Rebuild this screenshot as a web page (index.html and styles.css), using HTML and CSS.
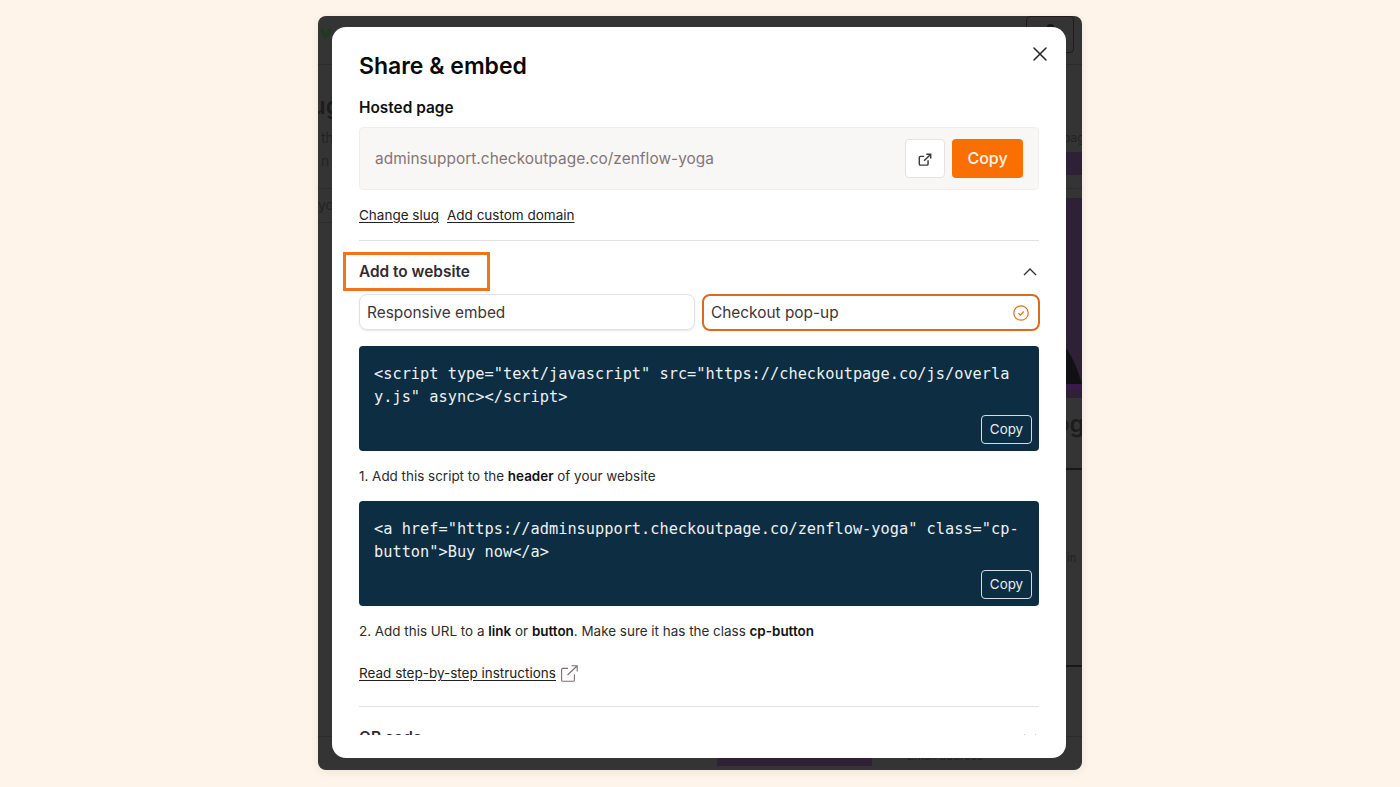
FILE: index.html
```html
<!DOCTYPE html>
<html lang="en">
<head>
<meta charset="utf-8">
<title>Share &amp; embed</title>
<link rel="stylesheet" href="styles.css">
</head>
<body>
<div class="window">
  <div class="backdrop">
    <svg class="bg-leaf" viewBox="0 0 14 14"><path d="M7 13C3 11 1 8 2 3c3 1 5 3 5 6 0-4 2-6 5-7 1 5-1 9-5 11z" fill="#1f3a22"/></svg>
    <div class="bg-btn"><span class="bg-btn-mark"></span></div>
    <div class="bg-hline bg-h1"></div>
    <div class="bg-hline bg-h2"></div>
    <div class="bg-hline bg-h3"></div>
    <div class="bg-hline bg-h4"></div>
    <div class="bg-hline bg-h5"></div>
    <div class="bg-hline bg-h6"></div>
    <div class="bg-band bg-b1"></div>
    <div class="bg-band bg-b2">
      <svg class="bg-shape" viewBox="0 0 16 50" width="16" height="50"><path d="M0 0C6 8 11 20 16 36H0z" fill="#111015"/><rect y="36" width="16" height="6" fill="#3a1a4a"/></svg>
    </div>
    <div class="bg-band bg-b3"></div>
    <span class="bg-t bg-ug">ug</span>
    <span class="bg-t bg-small bg-th">th</span>
    <span class="bg-t bg-small bg-nt">n t</span>
    <span class="bg-t bg-small bg-yo">yo</span>
    <span class="bg-t bg-small bg-pag">pag</span>
    <span class="bg-t bg-og">og</span>
    <span class="bg-t bg-small bg-in">in</span>
    <span class="bg-t bg-small bg-email">Email address</span>
  </div>
  <section class="modal">
    <button class="close" aria-label="Close">
      <svg viewBox="0 0 16 16" width="16" height="16"><path d="M2 2l12 12M14 2L2 14" fill="none" stroke="#222" stroke-width="1.5" stroke-linecap="round"/></svg>
    </button>
    <div class="scroll">
      <h1 class="title">Share &amp; embed</h1>
      <h2 class="label">Hosted page</h2>
      <div class="hosted">
        <span class="url">adminsupport.checkoutpage.co/zenflow-yoga</span>
        <button class="open-btn" aria-label="Open">
          <svg viewBox="0 0 16 16" width="14" height="14"><path d="M7 5H2.800A1.300 1.300 0 0 0 1.500 6.300v7.400a1.300 1.300 0 0 0 1.300 1.300h7.400a1.300 1.300 0 0 0 1.300-1.300V9.500M7 10l7.500-7.500M9.500 2.500h5v5" fill="none" stroke="#3f3a3c" stroke-width="1.700"/></svg>
        </button>
        <button class="copy-main">Copy</button>
      </div>
      <div class="links">
        <a class="link" href="#">Change slug</a>
        <a class="link" href="#">Add custom domain</a>
      </div>
      <hr class="rule">
      <div class="acc-head">
        <h2 class="acc-title highlighted">Add to website</h2>
        <svg class="chev" viewBox="0 0 14 8" width="14" height="8"><path d="M1 7l6-6 6 6" fill="none" stroke="#333" stroke-width="1.400"/></svg>
      </div>
      <div class="tabs">
        <div class="tab">Responsive embed</div>
        <div class="tab active">Checkout pop-up
          <svg viewBox="0 0 16 16" width="16" height="16"><circle cx="8" cy="8" r="7.200" fill="none" stroke="#e0701e" stroke-width="1.200"/><path d="M5.400 8.200l1.900 1.900 3.400-3.600" fill="none" stroke="#e0701e" stroke-width="1.200"/></svg>
        </div>
      </div>
      <div class="code">
        <code>&lt;script type="text/javascript" src="https://checkoutpage.co/js/overlay.js" async&gt;&lt;/script&gt;</code>
        <button class="copy-code">Copy</button>
      </div>
      <p class="note">1. Add this script to the <b>header</b> of your website</p>
      <div class="code">
        <code>&lt;a href="https://adminsupport.checkoutpage.co/zenflow-yoga" class="cp-button"&gt;Buy now&lt;/a&gt;</code>
        <button class="copy-code">Copy</button>
      </div>
      <p class="note">2. Add this URL to a <b>link</b> or <b>button</b>. Make sure it has the class <b>cp-button</b></p>
      <div class="steps">
        <a class="link" href="#">Read step-by-step instructions</a>
        <svg viewBox="0 0 17 17" width="17" height="17"><path d="M7 3.400H1.600a1 1 0 0 0-1 1v10.800a1 1 0 0 0 1 1h10.800a1 1 0 0 0 1-1V9.500M6.500 10 16 1M10.500.8h5.700v5.700" fill="none" stroke="#7d6c70" stroke-width="1.100"/></svg>
      </div>
      <hr class="rule rule-lower">
      <div class="acc-head">
        <h2 class="acc-title">QR code</h2>
        <svg class="chev" viewBox="0 0 14 8" width="14" height="8"><path d="M1 1l6 6 6-6" fill="none" stroke="#333" stroke-width="1.400"/></svg>
      </div>
    </div>
  </section>
</div>
</body>
</html>
```
FILE: styles.css
```css
* { box-sizing: border-box; }
html, body { margin: 0; height: 100%; }
body {
  background: #fef4ea;
  padding-top: 16px;
  font-family: Inter, "Liberation Sans", sans-serif;
  overflow: hidden;
  color: #111;
}
.window {
  position: relative;
  width: 764px;
  height: 754px;
  margin: 0 auto;
  border-radius: 8px;
  background: #343434;
  overflow: hidden;
  box-shadow: 0 2px 8px rgba(60, 40, 20, .08);
}
.backdrop { position: absolute; inset: 0; }
.bg-leaf { position: absolute; left: 1px; top: 10px; width: 14px; height: 14px; }
.bg-btn { position: absolute; left: 708px; top: 0; width: 48px; height: 37px; border: 1px solid #221a18; border-radius: 4px; }
.bg-btn-mark { position: absolute; left: 20px; top: 7px; width: 7px; height: 5px; border-radius: 3px 3px 0 0; background: #151515; }
.bg-hline { position: absolute; left: 0; right: 0; height: 1px; background: #2c2c2c; }
.bg-h1 { top: 48px; }
.bg-h2 { top: 172px; left: 0; }
.bg-h3 { top: 206px; }
.bg-h4 { top: 452px; left: 740px; height: 2px; background: #181818; }
.bg-h5 { top: 649px; left: 740px; height: 2px; background: #181818; }
.bg-h6 { top: 720px; }
.bg-band { position: absolute; background: #2e2035; }
.bg-b1 { left: 748px; width: 16px; top: 136px; height: 23px; }
.bg-b2 { left: 748px; width: 16px; top: 182px; height: 200px; }
.bg-b3 { left: 399px; width: 155px; top: 730px; height: 20px; }
.bg-shape { position: absolute; left: 0; top: 150px; }
.bg-t { position: absolute; color: #1c1c1c; font-size: 24px; font-weight: 600; line-height: 1; }
.bg-small { font-size: 14px; font-weight: 400; color: #232323; }
.bg-ug { left: -7px; top: 78px; }
.bg-th { left: 3px; top: 115px; }
.bg-nt { left: 3px; top: 138px; }
.bg-yo { left: 0; top: 182px; }
.bg-pag { left: 745px; top: 116px; font-size: 12px; }
.bg-og { left: 737px; top: 396px; }
.bg-in { left: 749px; top: 537px; font-size: 11px; }
.bg-email { left: 589px; top: 735px; font-size: 11.500px; }
.modal {
  position: absolute;
  left: 14px;
  top: 11px;
  width: 734px;
  height: 731px;
  background: #fff;
  border-radius: 14px;
}
.close {
  position: absolute;
  top: 19px;
  right: 18px;
  width: 16px;
  height: 16px;
  padding: 0;
  border: 0;
  background: none;
  display: flex;
  z-index: 1;
}
.scroll { height: 708px; overflow: hidden; padding: 25px 27px 0; }
.title { margin: 0; font-size: 23px; line-height: 29px; font-weight: 600; color: #0a0a0a; }
.label { margin: 17px 0 0; font-size: 15.400px; line-height: 20px; font-weight: 600; color: #111; }
.hosted {
  margin-top: 9px;
  height: 63px;
  display: flex;
  align-items: center;
  gap: 7px;
  padding: 0 15px;
  background: #f9f7f6;
  border: 1px solid #f1efee;
  border-radius: 4px;
}
.url { flex: 1; font-size: 15.400px; color: #85757a; letter-spacing: .05px; }
.open-btn {
  width: 40px;
  height: 39px;
  padding: 0;
  display: flex;
  align-items: center;
  justify-content: center;
  background: #fff;
  border: 1px solid #e4e2e2;
  border-radius: 4px;
}
.copy-main {
  width: 71px;
  height: 39px;
  padding: 0 0 2px;
  border: 0;
  border-radius: 4px;
  background: #f96f03;
  color: #fdf3ea;
  font: 500 16px Inter, sans-serif;
}
.links { display: flex; gap: 8px; margin-top: 16px; line-height: 18px; }
.link { color: #222; text-decoration: underline; text-underline-offset: 2px; font-size: 13.500px; font-weight: 400; }
.rule { margin: 16px 0 0; border: 0; height: 1px; background: #e3e1e3; }
.acc-head { display: flex; align-items: center; justify-content: space-between; height: 33px; margin-top: 14px; padding-right: 2px; }
.acc-title { margin: 0; font-size: 15.400px; line-height: 20px; font-weight: 600; color: #332b30; }
.highlighted { outline: 3px solid #f5721a; margin-left: -13px; padding: 6.500px 17px 6.500px 13px; }
.tabs { display: grid; grid-template-columns: 336px 338px; gap: 7px; margin-top: 6px; align-items: start; }
.tab {
  height: 36px;
  display: flex;
  align-items: center;
  justify-content: space-between;
  padding: 0 8px 0 7px;
  border: 1px solid #e3e1e1;
  border-radius: 8px;
  box-shadow: 0 1px 2px rgba(0, 0, 0, .1);
  font-size: 15.400px;
  color: #413538;
}
.tab.active { border: 2px solid #dd6a1c; padding: 0 9px 0 7px; height: 37px; box-shadow: none; }
.code {
  position: relative;
  height: 105px;
  margin-top: 15px;
  padding: 17px 15px 15px;
  background: #0d2d42;
  border-radius: 4px;
  color: #eef1f2;
}
.code code { display: block; font: 15.300px/23px "DejaVu Sans Mono", monospace; word-break: break-all; }
.copy-code {
  position: absolute;
  right: 7px;
  bottom: 7px;
  width: 51px;
  height: 29px;
  padding: 0 0 2px;
  background: none;
  border: 1px solid #d6dde0;
  border-radius: 4px;
  color: #e9edef;
  font: 400 13.400px Inter, sans-serif;
}
.note { margin: 16px 0 0; font-size: 13.440px; line-height: 18px; color: #2b2b2b; }
.note + .code { margin-top: 16px; }
.note b { font-weight: 600; color: #111; }
.steps { display: flex; align-items: center; gap: 5px; margin-top: 24px; height: 18px; line-height: 18px; }
.rule-lower { margin-top: 24px; }
```
